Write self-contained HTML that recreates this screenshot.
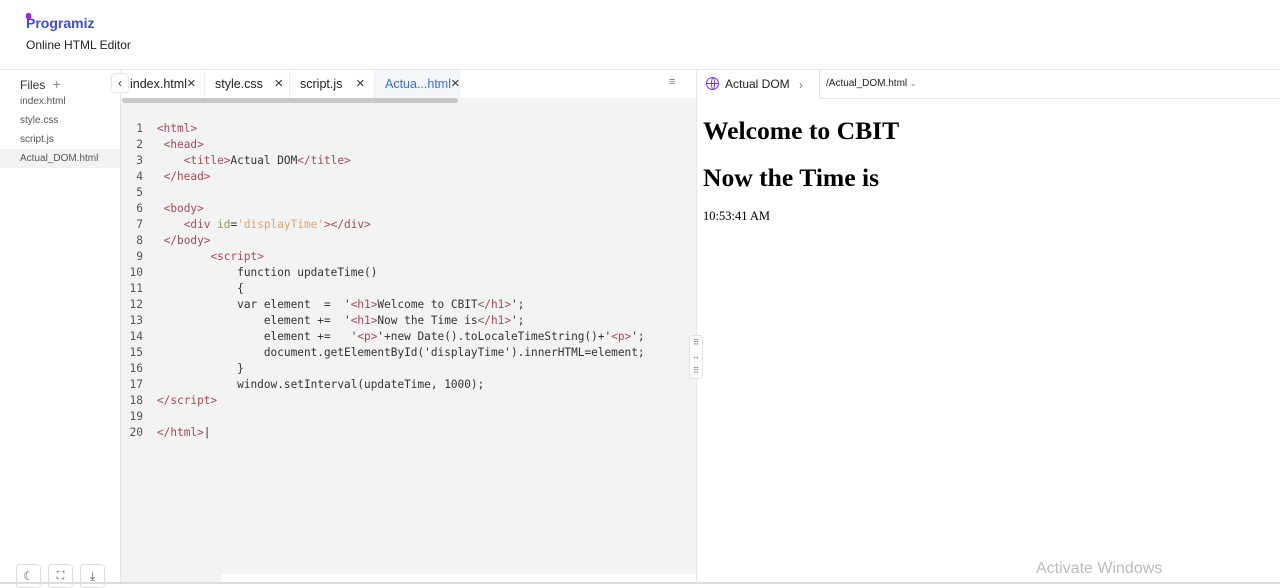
<!DOCTYPE html>
<html><head><style>
*{margin:0;padding:0;box-sizing:border-box}
body{width:1280px;height:584px;overflow:hidden;background:#fff;font-family:"Liberation Sans",sans-serif;position:relative;color:#222}
.abs{position:absolute}
.code{position:absolute;left:121px;top:104px;width:575px;height:470px;background:#f3f3f3}
.ln{position:absolute;left:0;width:22px;text-align:right;font:11.2px/16px "DejaVu Sans Mono",monospace;color:#555}
.cl{position:absolute;left:36px;white-space:pre;font:11.1px/16px "DejaVu Sans Mono",monospace;color:#333}
.t{color:#a34b55}.a{color:#8a9a5b}.s{color:#d9a56e}
.tab{position:absolute;top:70px;height:28px;font-size:12.5px;line-height:28px;color:#222;border-right:1px solid #eee}
.x{font-size:15px;color:#333}
.file{position:absolute;left:20px;font-size:10px;color:#555}
.btn{position:absolute;top:564px;width:25px;height:24px;border:1px solid #ddd;border-radius:4px;background:#fff}
</style></head><body>
<div class="abs" style="left:26px;top:15px;font-weight:bold;font-size:14px;color:#3b4ce0">Programiz</div>
<div class="abs" style="left:26px;top:13px;width:5px;height:6px;background:#a020f0;border-radius:2px"></div>
<div class="abs" style="left:26px;top:38px;font-size:12px;color:#222">Online HTML Editor</div>
<div class="abs" style="left:0;top:69px;width:1280px;height:1px;background:#e6e6e6"></div>
<div class="abs" style="left:120px;top:70px;width:1px;height:514px;background:#e6e6e6"></div>
<div class="abs" style="left:20px;top:76px;font-size:12px;color:#333">Files <span style="color:#888;font-size:14px;margin-left:4px">+</span></div>
<div class="file" style="top:96px">index.html</div>
<div class="file" style="top:115px">style.css</div>
<div class="file" style="top:134px">script.js</div>
<div class="abs" style="left:0;top:149px;width:120px;height:19px;background:#f2f2f2"></div>
<div class="file" style="top:153px">Actual_DOM.html</div>
<div class="abs" style="left:111px;top:73px;width:18px;height:20px;background:#fff;border:1px solid #e5e5e5;border-radius:4px;font-size:12px;text-align:center;line-height:18px;color:#333">&#8249;</div>
<div class="tab" style="left:130px;width:75px">index.html<span class="x">×</span></div>
<div class="tab" style="left:205px;width:85px;padding-left:10px">style.css <span class="x" style="margin-left:8px">×</span></div>
<div class="tab" style="left:290px;width:85px;padding-left:10px">script.js <span class="x" style="margin-left:10px">×</span></div>
<div class="tab" style="left:375px;width:85px;padding-left:10px;background:#f4f6fa;color:#3a6fd8">Actua...html<span class="x">×</span></div>
<div class="abs" style="left:669px;top:76px;width:12px;font-size:11px;color:#777">≡</div>
<div class="abs" style="left:121px;top:98px;width:575px;height:6px;background:#f3f3f3"></div>
<div class="abs" style="left:122px;top:98px;width:336px;height:5px;background:#c8c8c8;border-radius:3px"></div>
<div class="code">
<div class="ln" style="top:17px">1<br>2<br>3<br>4<br>5<br>6<br>7<br>8<br>9<br>10<br>11<br>12<br>13<br>14<br>15<br>16<br>17<br>18<br>19<br>20</div>
<div class="cl" style="top:17px"><span class="t">&lt;html&gt;</span>
 <span class="t">&lt;head&gt;</span>
    <span class="t">&lt;title&gt;</span>Actual DOM<span class="t">&lt;/title&gt;</span>
 <span class="t">&lt;/head&gt;</span>

 <span class="t">&lt;body&gt;</span>
    <span class="t">&lt;div</span> <span class="a">id</span>=<span class="s">'displayTime'</span><span class="t">&gt;&lt;/div&gt;</span>
 <span class="t">&lt;/body&gt;</span>
        <span class="t">&lt;script&gt;</span>
            function updateTime()
            {
            var element  =  '<span class="t">&lt;h1&gt;</span>Welcome to CBIT<span class="t">&lt;/h1&gt;</span>';
                element +=  '<span class="t">&lt;h1&gt;</span>Now the Time is<span class="t">&lt;/h1&gt;</span>';
                element +=   '<span class="t">&lt;p&gt;</span>'+new Date().toLocaleTimeString()+'<span class="t">&lt;p&gt;</span>';
                document.getElementById('displayTime').innerHTML=element;
            }
            window.setInterval(updateTime, 1000);
<span class="t">&lt;/script&gt;</span>

<span class="t">&lt;/html&gt;</span>|</div>
</div>
<div class="abs" style="left:121px;top:574px;width:575px;height:10px;background:#f3f3f3"></div>
<div class="abs" style="left:222px;top:574px;width:474px;height:10px;background:#fff"></div>
<div class="abs" style="left:696px;top:70px;width:1px;height:514px;background:#e6e6e6"></div>
<div class="abs" style="left:689px;top:335px;width:14px;height:44px;background:#fff;border:1px solid #e2e2e2;border-radius:3px;font-size:8px;color:#556;text-align:center;line-height:14px">⠿<br>↔<br>⠿</div>
<div class="abs" style="left:706px;top:77px;width:13px;height:13px;border:1.5px solid #7b2ff0;border-radius:50%"></div>
<div class="abs" style="left:711px;top:77px;width:4px;height:13px;border:1.3px solid #7b2ff0;border-radius:50%"></div>
<div class="abs" style="left:706px;top:83px;width:13px;height:1.3px;background:#7b2ff0"></div>
<div class="abs" style="left:725px;top:77px;font-size:12px;color:#222">Actual DOM</div>
<div class="abs" style="left:799px;top:78px;font-size:12px;color:#777">›</div>
<div class="abs" style="left:819px;top:70px;width:1px;height:28px;background:#e6e6e6"></div>
<div class="abs" style="left:819px;top:98px;width:461px;height:1px;background:#e6e6e6"></div>
<div class="abs" style="left:826px;top:78px;font-size:10px;color:#222">/Actual_DOM.html <span style="color:#888;font-size:8px">⌄</span></div>
<div class="abs" style="left:703px;top:116px;font:bold 25.6px 'Liberation Serif',serif;color:#000">Welcome to CBIT</div>
<div class="abs" style="left:703px;top:163px;font:bold 25.6px 'Liberation Serif',serif;color:#000">Now the Time is</div>
<div class="abs" style="left:703px;top:209px;font:12.5px 'Liberation Serif',serif;color:#000">10:53:41 AM</div>
<div class="btn" style="left:16px;font-size:12px;text-align:center;line-height:22px;color:#556">☾</div>
<div class="btn" style="left:48px;font-size:11px;text-align:center;line-height:22px;color:#556">⛶</div>
<div class="btn" style="left:80px;font-size:12px;text-align:center;line-height:22px;color:#556">⤓</div>
<div class="abs" style="left:1036px;top:560px;font-size:16px;color:#bbb">Activate Windows</div>
<div class="abs" style="left:0;top:582px;width:1280px;height:2px;background:#ddd"></div>
</body></html>
